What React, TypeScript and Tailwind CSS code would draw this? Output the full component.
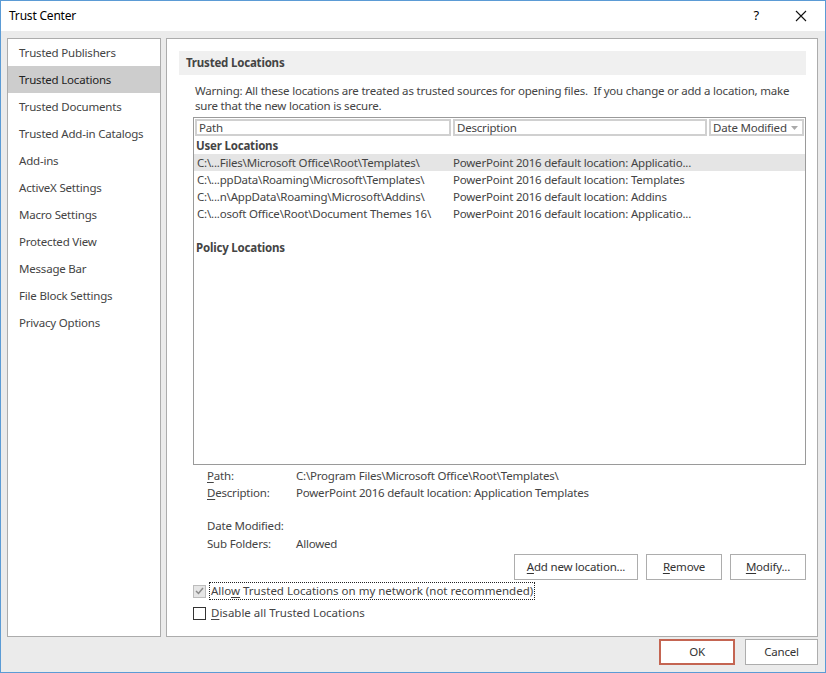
import React from 'react';

const navItems = [
  'Trusted Publishers',
  'Trusted Locations',
  'Trusted Documents',
  'Trusted Add-in Catalogs',
  'Add-ins',
  'ActiveX Settings',
  'Macro Settings',
  'Protected View',
  'Message Bar',
  'File Block Settings',
  'Privacy Options',
];

const userLocations = [
  { path: 'C:\\...Files\\Microsoft Office\\Root\\Templates\\', desc: 'PowerPoint 2016 default location: Applicatio...', selected: true },
  { path: 'C:\\...ppData\\Roaming\\Microsoft\\Templates\\', desc: 'PowerPoint 2016 default location: Templates' },
  { path: 'C:\\...n\\AppData\\Roaming\\Microsoft\\Addins\\', desc: 'PowerPoint 2016 default location: Addins' },
  { path: 'C:\\...osoft Office\\Root\\Document Themes 16\\', desc: 'PowerPoint 2016 default location: Applicatio...' },
];

function Key({ children }: { children: React.ReactNode }) {
  return <span className="underline underline-offset-2">{children}</span>;
}

function Button({ children, className = '' }: { children: React.ReactNode; className?: string }) {
  return (
    <button className={`h-[26px] border border-[#adadad] bg-white text-[#333] ${className}`}>
      <span>{children}</span>
    </button>
  );
}

export default function App() {
  return (
    <div
      className="w-[826px] h-[673px] border border-[#5b9bd5] bg-[#ebebeb] flex flex-col text-[11.5px] tracking-[-0.2px] text-[#444]"
      style={{ fontFamily: '"Noto Sans", sans-serif' }}
    >
      {/* title bar */}
      <div className="h-[30px] bg-white flex items-center justify-between pl-[8px] pr-[16px] text-black shrink-0">
        <span className="text-[12px]">Trust Center</span>
        <div className="flex items-center gap-[36px]">
          <span className="text-[13px]">?</span>
          <svg width="12" height="12" viewBox="0 0 12 12" className="mr-[2px]">
            <path d="M1 1 L11 11 M11 1 L1 11" stroke="#111" strokeWidth="1.1" />
          </svg>
        </div>
      </div>

      {/* body */}
      <div className="flex-1 flex gap-[5px] pl-[6px] pr-[7px] pt-[7px] min-h-0">
        <div className="w-[154px] bg-white border border-[#acacac] flex flex-col">
          {navItems.map((item) => (
            <div
              key={item}
              className={`h-[27px] flex items-center pl-[11px] ${item === 'Trusted Locations' ? 'bg-[#cdcdcd] text-[#222]' : ''}`}
            >
              {item}
            </div>
          ))}
        </div>

        <div className="flex-1 bg-white border border-[#acacac] flex flex-col">
          <div className="mt-[12px] ml-[12px] mr-[11px] h-[24px] bg-[#f0f0f0] flex items-center pl-[7px] font-bold text-[#444]">
            Trusted Locations
          </div>

          <div className="ml-[26px] mr-[11px] flex flex-col">
            <p className="mt-[8px] ml-[2px] leading-[15px]">
              Warning: All these locations are treated as trusted sources for opening files.&nbsp; If you change or add a location, make sure that the new location is secure.
            </p>

            {/* table */}
            <div className="mt-[4px] h-[348px] border border-[#9a9a9a] flex flex-col">
              <div className="flex gap-[2px] p-[1px] h-[19px] whitespace-nowrap">
                <div className="w-[256px] border-2 border-[#d0d0d0] flex items-center pl-[2px]">Path</div>
                <div className="w-[254px] border-2 border-[#d0d0d0] flex items-center pl-[2px]">Description</div>
                <div className="flex-1 border-2 border-[#d0d0d0] flex items-center justify-between pl-[2px] pr-[4px]">
                  <span>Date Modified</span>
                  <svg width="7" height="4" viewBox="0 0 7 4">
                    <path d="M0 0 L7 0 L3.5 4 Z" fill="#aaa" />
                  </svg>
                </div>
              </div>
              <div className="h-[17px] flex items-center pl-[2px] font-bold">User Locations</div>
              {userLocations.map((row) => (
                <div
                  key={row.path}
                  className={`h-[17px] flex items-center ${row.selected ? 'bg-[#e5e5e5]' : ''}`}
                >
                  <span className="w-[256px] pl-[3px] whitespace-nowrap overflow-hidden">{row.path}</span>
                  <span className="pl-[3px] whitespace-nowrap">{row.desc}</span>
                </div>
              ))}
              <div className="h-[17px]" />
              <div className="h-[17px] flex items-center pl-[2px] font-bold">Policy Locations</div>
            </div>

            {/* details */}
            <div className="mt-[2px] pl-[14px] flex flex-col leading-[17px]">
              <div className="flex">
                <span className="w-[89px]"><Key>P</Key>ath:</span>
                <span>C:\Program Files\Microsoft Office\Root\Templates\</span>
              </div>
              <div className="flex">
                <span className="w-[89px]"><Key>D</Key>escription:</span>
                <span>PowerPoint 2016 default location: Application Templates</span>
              </div>
              <div className="h-[16px]" />
              <div className="flex">
                <span className="w-[89px]">Date Modified:</span>
                <span></span>
              </div>
              <div className="flex mt-[1px]">
                <span className="w-[89px]">Sub Folders:</span>
                <span>Allowed</span>
              </div>
            </div>

            <div className="flex justify-end gap-[8px] mt-[2px]">
              <Button className="w-[124px]"><Key>A</Key>dd new location...</Button>
              <Button className="w-[76px]"><Key>R</Key>emove</Button>
              <Button className="w-[76px]"><Key>M</Key>odify...</Button>
            </div>

            <div className="flex flex-col mt-[2px] gap-[4px]">
              <div className="flex items-center gap-[3px] h-[18px]">
                <span className="w-[13px] h-[13px] border border-[#bcbcbc] bg-[#e6e6e6] flex items-center justify-center">
                  <svg width="9" height="8" viewBox="0 0 9 8">
                    <path d="M1 4 L3.5 6.5 L8 1" stroke="#8a8a8a" strokeWidth="1.5" fill="none" />
                  </svg>
                </span>
                <span className="border border-dotted border-[#222] px-[1px] h-[18px] leading-[16px] tracking-[0px]">
                  Allo<Key>w</Key> Trusted Locations on my network (not recommended)
                </span>
              </div>
              <div className="flex items-center gap-[5px] h-[18px]">
                <span className="w-[13px] h-[13px] border border-[#333] bg-white" />
                <span className="tracking-[0px]"><Key>D</Key>isable all Trusted Locations</span>
              </div>
            </div>
          </div>
        </div>
      </div>

      {/* footer */}
      <div className="h-[35px] shrink-0 flex justify-end items-start gap-[10px] pr-[7px] pt-[2px]">
        <button className="w-[76px] h-[26px] border-2 border-[#c46552] bg-white text-[#333]">OK</button>
        <button className="w-[73px] h-[26px] border border-[#adadad] bg-white text-[#333]">Cancel</button>
      </div>
    </div>
  );
}
